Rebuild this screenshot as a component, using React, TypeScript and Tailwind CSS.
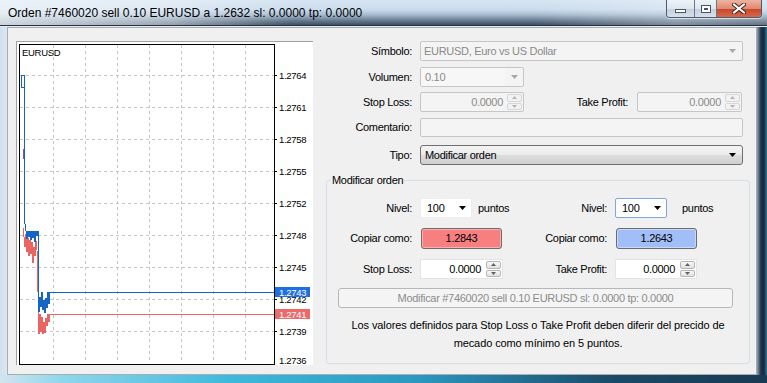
import React from 'react'

type TriProps = { dir?: 'up' | 'down'; color?: string; w?: number; h?: number }

function Tri({ dir = 'down', color = '#000', w = 7, h = 4 }: TriProps) {
  const pts = dir === 'down' ? `0,0 ${w},0 ${w / 2},${h}` : `0,${h} ${w},${h} ${w / 2},0`
  return (
    <svg width={w} height={h} className="block">
      <polygon points={pts} fill={color} />
    </svg>
  )
}

function Spin({ disabled }: { disabled?: boolean }) {
  const box = disabled
    ? 'border-[#d6d6d6] bg-[#f2f2f2]'
    : 'border-[#b5b5b5] bg-[linear-gradient(#f8f8f8,#e0e0e0)]'
  const arrow = disabled ? '#b4b4b4' : '#606060'
  return (
    <div className="flex flex-col w-[15px] h-full py-[1px] gap-[1px] mr-[1px]">
      <div className={`flex-1 flex items-center justify-center border rounded-[2px] ${box}`}>
        <Tri dir="up" w={5} h={3} color={arrow} />
      </div>
      <div className={`flex-1 flex items-center justify-center border rounded-[2px] ${box}`}>
        <Tri dir="down" w={5} h={3} color={arrow} />
      </div>
    </div>
  )
}

// price chart, local coords = screen - (16, 41)
const gridX = [36, 68, 100, 132, 164, 196, 228]
const gridY = [33, 65, 97, 129, 161, 193, 225, 257, 289]
const labels = ['1.2764', '1.2761', '1.2758', '1.2755', '1.2752', '1.2748', '1.2745', '1.2742', '1.2739']

const askPts =
  '7,33 7,177 8,182 9,189 10,197 11,189 12,195 13,189 14,198 15,189 16,196 17,189 18,200 19,189 20,194 21,189 21,262 22,270 23,255 24,265 25,250 26,268 27,258 28,271 29,256 30,266 31,250 32,262 33,250 34,250 257,250'
const bidPts =
  '6,186 7,195 8,205 9,192 10,210 11,196 12,214 13,198 14,212 15,200 16,221 17,205 18,214 19,199 20,208 21,250 21,280 22,292 23,272 24,290 25,275 26,292 27,280 28,291 29,276 30,284 31,272 32,280 33,272 34,272 257,272'

function Chart() {
  return (
    <div className="w-[297px] h-[324px] bg-white border-t border-l border-[#a0a0a0] shrink-0">
      <svg width={296} height={323} className="block font-['Liberation_Sans',Arial,sans-serif]" shapeRendering="crispEdges">
        {gridX.map((x) => (
          <line key={x} x1={x + 0.5} y1={3} x2={x + 0.5} y2={321} stroke="#c4c4c4" strokeDasharray="3 3" />
        ))}
        {gridY.map((y) => (
          <line key={y} x1={3} y1={y + 0.5} x2={257} y2={y + 0.5} stroke="#c4c4c4" strokeDasharray="3 3" />
        ))}
        {gridY.map((y, i) => (
          <g key={'l' + y}>
            <line x1={257} y1={y + 0.5} x2={260} y2={y + 0.5} stroke="#000" />
            <text x={262} y={y + 4} fontSize="9.5" fill="#000">{labels[i]}</text>
          </g>
        ))}
        <text x={262} y={322} fontSize="9.5" fill="#000">1.2736</text>
        <text x={5} y={14} fontSize="9.5" fill="#000">EURUSD</text>
        <rect x={4.5} y={33.5} width={2.5} height={12} fill="none" stroke="#1565c8" />
        <polyline points={bidPts} fill="none" stroke="#ea6464" />
        <polyline points={askPts} fill="none" stroke="#1565c8" />
        <rect x={6} y={107} width={1} height={10} fill="#8a50b0" />
        <rect x={2.5} y={2.5} width={255} height={320} fill="none" stroke="#000" />
        <rect x={258} y={245} width={35} height={10} fill="#1f6fe0" />
        <text x={262} y={254} fontSize="9.5" fill="#fff">1.2743</text>
        <rect x={258} y={267} width={35} height={10} fill="#ee6a6a" />
        <text x={262} y={276} fontSize="9.5" fill="#fff">1.2741</text>
      </svg>
    </div>
  )
}

function Label({ w, children }: { w: string; children: React.ReactNode }) {
  return <div className={`${w} text-right shrink-0`}>{children}</div>
}

function OrderForm() {
  return (
    <div className="flex flex-col">
      {/* Símbolo */}
      <div className="flex items-center h-[20px]">
        <Label w="w-[99px]">Símbolo:</Label>
        <div className="ml-[8px] w-[323px] h-full flex items-center justify-between border border-[#c6c6c6] rounded-[2px] bg-[#f4f4f4] text-[#8a8a8a] pl-[3px] pr-[6px]">
          <span>EURUSD, Euro vs US Dollar</span>
          <Tri color="#a8a8a8" w={7} h={4} />
        </div>
      </div>
      {/* Volumen */}
      <div className="flex items-center h-[20px] mt-[6px]">
        <Label w="w-[99px]">Volumen:</Label>
        <div className="ml-[8px] w-[104px] h-full flex items-center border border-[#c6c6c6] rounded-[2px] bg-[#f4f4f4] text-[#8a8a8a]">
          <span className="flex-1 h-full flex items-center bg-[#f7f7f7] pl-[4px]">0.10</span>
          <span className="w-[18px] flex justify-center"><Tri color="#a8a8a8" w={7} h={4} /></span>
        </div>
      </div>
      {/* Stop Loss / Take Profit */}
      <div className="flex items-center h-[20px] mt-[5px]">
        <Label w="w-[99px]">Stop Loss:</Label>
        <div className="ml-[8px] w-[104px] h-full flex items-center border border-[#c6c6c6] rounded-[2px] bg-[#f4f4f4] text-[#8a8a8a]">
          <span className="flex-1 text-right pr-[4px]">0.0000</span>
          <Spin disabled />
        </div>
        <Label w="w-[104px]">Take Profit:</Label>
        <div className="ml-[9px] w-[105px] h-full flex items-center border border-[#c6c6c6] rounded-[2px] bg-[#f4f4f4] text-[#8a8a8a]">
          <span className="flex-1 text-right pr-[4px]">0.0000</span>
          <Spin disabled />
        </div>
      </div>
      {/* Comentario */}
      <div className="flex items-center h-[19px] mt-[6px]">
        <Label w="w-[99px]">Comentario:</Label>
        <div className="ml-[8px] w-[323px] h-full border border-[#c6c6c6] rounded-[2px] bg-[#f4f4f4]" />
      </div>
      {/* Tipo */}
      <div className="flex items-center h-[20px] mt-[8px]">
        <Label w="w-[99px]">Tipo:</Label>
        <div className="ml-[8px] w-[323px] h-full flex items-center justify-between border border-[#707070] rounded-[3px] bg-[linear-gradient(#f3f3f3_0%,#ebebeb_50%,#dddddd_51%,#cfcfcf_100%)] pl-[4px] pr-[6px]">
          <span>Modificar orden</span>
          <Tri color="#000" w={7} h={4} />
        </div>
      </div>

      {/* Modificar orden group */}
      <fieldset className="ml-[13px] mt-[8px] w-[424px] border border-[#d5dfe5] rounded-[3px] pt-[11px] pb-[11px]">
        <legend className="ml-[4px] px-[1px] leading-[14px]">Modificar orden</legend>

        <div className="flex items-center h-[20px]">
          <div className="w-[185px] flex items-center h-full shrink-0">
            <Label w="w-[85px]">Nivel:</Label>
            <div className="ml-[8px] w-[52px] h-full flex items-center justify-between bg-white border border-[#eeeeee] pl-[6px] pr-[5px]">
              <span>100</span>
              <Tri w={7} h={4} />
            </div>
            <span className="ml-[6px]">puntos</span>
          </div>
          <Label w="w-[95px]">Nivel:</Label>
          <div className="ml-[8px] w-[52px] h-full flex items-center justify-between bg-white border border-[#7ea8d8] rounded-[2px] pl-[6px] pr-[5px]">
            <span>100</span>
            <Tri w={7} h={4} />
          </div>
          <span className="ml-[15px]">puntos</span>
        </div>

        <div className="flex items-center h-[21px] mt-[10px]">
          <div className="w-[185px] flex items-center h-full shrink-0">
            <Label w="w-[85px]">Copiar como:</Label>
            <div className="ml-[9px] w-[81px] h-full flex items-center justify-center border border-[#6c6c6c] rounded-[3px] bg-[#f87f80] shadow-[inset_0_0_0_1px_#fbb0b0]">
              1.2843
            </div>
          </div>
          <Label w="w-[95px]">Copiar como:</Label>
          <div className="ml-[9px] w-[81px] h-full flex items-center justify-center border border-[#6c6c6c] rounded-[3px] bg-[#a2bef8] shadow-[inset_0_0_0_1px_#c8d8fb]">
            1.2643
          </div>
        </div>

        <div className="flex items-center h-[20px] mt-[10px]">
          <div className="w-[185px] flex items-center h-full shrink-0">
            <Label w="w-[85px]">Stop Loss:</Label>
            <div className="ml-[8px] w-[83px] h-full flex items-center bg-white border border-[#e4e4e4]">
              <span className="flex-1 text-right pr-[5px]">0.0000</span>
              <Spin />
            </div>
          </div>
          <Label w="w-[95px]">Take Profit:</Label>
          <div className="ml-[8px] w-[82px] h-full flex items-center bg-white border border-[#e4e4e4]">
            <span className="flex-1 text-right pr-[5px]">0.0000</span>
            <Spin />
          </div>
        </div>

        <div className="ml-[11px] mt-[9px] w-[395px] h-[20px] flex items-center justify-center border border-[#b4b8bb] rounded-[3px] bg-[#f4f4f4] text-[#8c8c8c]">
          Modificar #7460020 sell 0.10 EURUSD sl: 0.0000 tp: 0.0000
        </div>

        <p className="mt-[8px] text-center leading-[18px] tracking-[-0.1px]">
          Los valores definidos para Stop Loss o Take Profit deben diferir del precido de
          <br />
          mecado como mínimo en 5 puntos.
        </p>
      </fieldset>
    </div>
  )
}

function WindowButtons() {
  return (
    <div className="flex h-[18px] mr-[5px] border border-t-0 border-[#4d5b6b] rounded-b-[4px] overflow-hidden shadow-[0_1px_0_rgba(255,255,255,0.6)]">
      <div className="w-[28px] flex items-center justify-center bg-[linear-gradient(#eef3f8_0%,#dde6ef_50%,#c3d0dd_51%,#d4e0ea_100%)] border-r border-[#6b7987]">
        <div className="w-[11px] h-[4px] mt-[4px] bg-white border border-[#4a5563]" />
      </div>
      <div className="w-[22px] flex items-center justify-center bg-[linear-gradient(#eef3f8_0%,#dde6ef_50%,#c3d0dd_51%,#d4e0ea_100%)] border-r border-[#6b7987]">
        <div className="w-[10px] h-[8px] bg-white border border-[#4a5563] flex items-center justify-center">
          <div className="w-[4px] h-[2px] border border-[#4a5563]" />
        </div>
      </div>
      <div className="w-[44px] flex items-center justify-center bg-[linear-gradient(#edb3a2_0%,#e08a72_50%,#c8462a_51%,#d5684c_100%)]">
        <svg width={14} height={11} className="block">
          <path d="M2 1.5 L12 9.5 M12 1.5 L2 9.5" stroke="#3b2520" strokeWidth={4} strokeLinecap="square" />
          <path d="M2 1.5 L12 9.5 M12 1.5 L2 9.5" stroke="#fff" strokeWidth={2} strokeLinecap="square" />
        </svg>
      </div>
    </div>
  )
}

export default function App() {
  return (
    <div className="w-[767px] h-[383px] flex flex-col overflow-hidden font-['Liberation_Sans',Arial,sans-serif] text-[11px] tracking-[-0.3px] text-black bg-[#d9e6f1]">
      {/* Title bar */}
      <div className="h-[25px] flex items-start justify-between bg-[linear-gradient(90deg,rgba(240,245,250,0.8)_0%,rgba(240,245,250,0.5)_22%,rgba(240,245,250,0)_38%,rgba(240,245,250,0)_70%,rgba(240,245,250,0.35)_88%,rgba(240,245,250,0.2)_100%),linear-gradient(180deg,#d7e5f2_0%,#cadcec_38%,#a9bdd1_58%,#5f7389_85%,#3e4f63_100%)]">
        <div className="pl-[8px] pt-[4px] text-[12px] tracking-[0px]">
          Orden #7460020 sell 0.10 EURUSD a 1.2632 sl: 0.0000 tp: 0.0000
        </div>
        <WindowButtons />
      </div>
      <div className="h-[1px] bg-[#28323d]" />
      <div className="h-[1px] bg-[#e4ebf1]" />

      {/* Body */}
      <div className="flex h-[348px]">
        <div className="w-[7px] bg-[linear-gradient(90deg,#cfe0ee,#dbe7f2)]" />
        <div className="w-[750px] h-full bg-[#f0f0f0] border border-[#a7adb3] flex pt-[13px] pl-[8px]">
          <Chart />
          <OrderForm />
        </div>
        <div className="w-[10px] bg-[linear-gradient(90deg,#8aa0b3_0%,#1d3147_40%,#18293b_70%,#2e7d98_100%)]" />
      </div>
      <div className="h-[8px] bg-[linear-gradient(90deg,#d3e4ee_0%,#8fd7ea_8%,#3db9dc_30%,#2a97bf_55%,#1b4a66_80%,#1a3a52_100%)]" />
    </div>
  )
}
